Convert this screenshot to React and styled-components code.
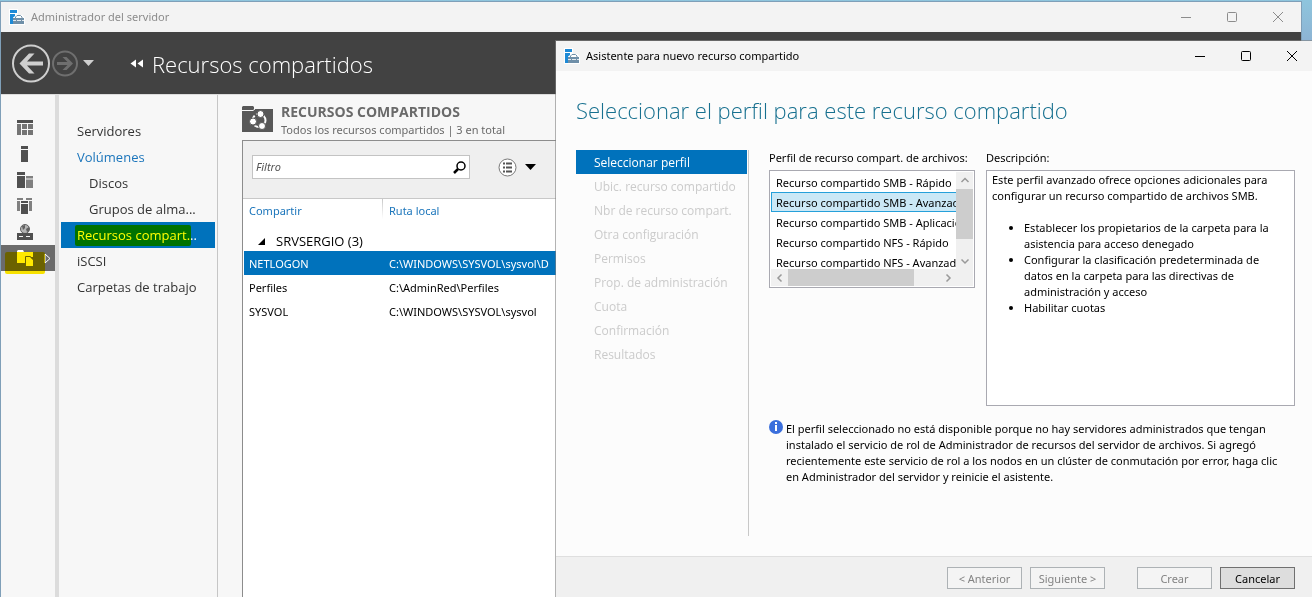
import React from 'react';
import styled, { createGlobalStyle, css } from 'styled-components';

const accent = '#0072bc';

const GlobalStyle = createGlobalStyle`
  * { box-sizing: border-box; }
  html, body, #root { height: 100%; margin: 0; }
  body {
    font-family: 'Noto Sans', 'Open Sans', sans-serif;
    font-size: 11px;
    line-height: 16px;
    color: #000;
    overflow: hidden;
  }
  button, input { font: inherit; color: inherit; }
  ul, h1, h2, p { margin: 0; padding: 0; font-weight: inherit; }
  ul { list-style: none; }
  a { color: inherit; text-decoration: none; }
  svg { display: block; flex: none; }
`;

const Desktop = styled.div`
  position: relative;
  height: 100vh;
  overflow: hidden;
  background: linear-gradient(#8ec5dd, #8db4d4 40px, #8fb0cc 60%, #3f9fc0 62%, #3b8fbd 80%, #3f5cab);
`;

/* ---------- windows ---------- */

const Window = styled.section`
  position: absolute;
  display: flex;
  flex-direction: column;
  border: 1px solid #7f9fb8;
  border-bottom: 0;
`;

const ManagerWindow = styled(Window)`
  inset: 1px 10px 0 0;
  background: #f7f7f7;
`;

const WizardWindow = styled(Window)`
  inset: 40px -4px 0 555px;
  border-color: rgba(128, 128, 128, 0.6);
  background: #fcfcfc;
  background-clip: padding-box;
`;

const TitleBar = styled.div`
  display: flex;
  align-items: center;
  height: 30px;
  flex: none;
  padding-left: 8px;
  gap: 6px;
  background: #f3f3f3;
  color: ${(p) => (p.$inactive ? '#8c8c8c' : '#000')};
`;

const TitleText = styled.span`
  flex: 1;
`;

const CaptionButton = styled.button`
  display: grid;
  place-items: center;
  width: 46px;
  height: 30px;
  margin: 0 0 0 -6px;
  padding: 0;
  border: 0;
  background: none;
`;

/* ---------- manager header ---------- */

const Banner = styled.header`
  display: flex;
  align-items: center;
  flex: none;
  height: 62px;
  padding-left: 10px;
  background: #424242;
  color: #fff;
`;

const PlainButton = styled.button`
  display: flex;
  align-items: center;
  margin: 0;
  padding: 0;
  border: 0;
  background: none;
`;

const HistoryButton = styled(PlainButton)`
  margin-right: 1px;
`;

const HistoryMenu = styled(PlainButton)`
  margin: 0 36px 0 4px;
`;

const BannerTitle = styled.h1`
  margin-left: 8px;
  padding-top: 2px;
  font-family: 'Open Sans', sans-serif;
  font-size: 22px;
  line-height: 32px;
  font-weight: 300;
`;

/* ---------- manager body ---------- */

const ManagerBody = styled.div`
  display: flex;
  flex: 1;
  min-height: 0;
  border-top: 1px solid #dcdcdc;
`;

const Rail = styled.nav`
  width: 58px;
  flex: none;
  padding-top: 20px;
  border-right: 4px solid #dcdcdc;
`;

const RailItem = styled.button`
  position: relative;
  display: flex;
  align-items: center;
  width: 100%;
  height: 26px;
  margin: 0;
  padding: 0 0 0 16px;
  border: 0;
  background: ${(p) => (p.$active ? '#6b6b6b' : 'none')};
`;

const RailArrow = styled.span`
  margin-left: 11px;
`;

const Marker = styled.span`
  position: absolute;
  background: ${(p) => p.$color};
  mix-blend-mode: multiply;
  pointer-events: none;
  border-radius: 2px;
`;

const RailMarker = styled(Marker)`
  inset: 7px 10px -3px 4px;
`;

const NavMarker = styled(Marker)`
  inset: 3px 24px 2px 14px;
`;

const SideNav = styled.nav`
  width: 159px;
  flex: none;
  padding: 23px 2px 0;
  border-right: 1px solid #c6c6c6;
  font-family: 'Open Sans', sans-serif;
  font-size: 13px;
`;

const NavLink = styled.a`
  position: relative;
  display: block;
  height: 26px;
  line-height: 26px;
  padding-left: ${(p) => (p.$nested ? 28 : 16)}px;
  white-space: nowrap;
  color: ${(p) => (p.$tone === 'link' ? '#1b75bb' : p.$active ? '#fff' : '#333')};
  background: ${(p) => (p.$active ? accent : 'none')};
`;

const Content = styled.main`
  flex: 1;
  min-width: 0;
  display: flex;
  flex-direction: column;
  padding: 7px 0 0 24px;
`;

const SectionHead = styled.div`
  display: flex;
  align-items: flex-start;
  gap: 8px;
  height: 38px;
  flex: none;
  color: #6a6a6a;
`;

const FolderSlot = styled.div`
  padding-top: 4px;
`;

const SectionTitle = styled.h2`
  padding-top: 1px;
  font-family: 'Open Sans', sans-serif;
  font-size: 14px;
  line-height: 18px;
  font-weight: 700;
`;

const SectionNote = styled.p`
  line-height: 18px;
`;

const Panel = styled.div`
  flex: 1;
  border: 1px solid #8c8c8c;
  border-width: 1px 0 0 1px;
  background: #fff;
`;

const Toolbar = styled.div`
  display: flex;
  align-items: center;
  height: 58px;
  padding: 0 0 5px 9px;
  background: #efefef;
  border-bottom: 1px solid #c8c8c8;
`;

const FilterBox = styled.label`
  display: flex;
  align-items: center;
  width: 218px;
  height: 24px;
  margin-right: 28px;
  padding: 0 3px;
  border: 1px solid #c3c3c3;
  background: #fff;
`;

const FilterInput = styled.input`
  flex: 1;
  min-width: 0;
  padding: 0;
  border: 0;
  outline: 0;
  background: none;
  font-style: italic;
  &::placeholder { color: #555; opacity: 1; }
`;

const OptionsButton = styled(PlainButton)`
  gap: 8px;
`;

const ShareTable = styled.table`
  width: 100%;
  padding-left: 1px;
  border-spacing: 0;
  table-layout: fixed;
  text-align: left;
`;

const HeadCell = styled.th`
  height: 32px;
  padding: 4px 0 0 ${(p) => (p.$first ? 5 : 6)}px;
  width: ${(p) => (p.$first ? '139px' : 'auto')};
  vertical-align: top;
  font-weight: 400;
  color: #1b75bb;
  background: ${(p) => (p.$first ? 'linear-gradient(#c8c8c8, #fff) right top / 1px 20px no-repeat' : 'none')};
`;

const GroupCell = styled.td`
  height: 20px;
  padding: 0 0 0 14px;
  font-family: 'Open Sans', sans-serif;
  font-size: 13px;
`;

const GroupLabel = styled.span`
  display: flex;
  align-items: center;
  gap: 10px;
`;

const ShareRow = styled.tr`
  height: 24px;
  color: ${(p) => (p.$selected ? '#fff' : '#000')};
  background: ${(p) => (p.$selected ? accent : 'none')};
`;

const Cell = styled.td`
  padding: 1px 0 0 ${(p) => (p.$first ? 5 : 6)}px;
  white-space: nowrap;
`;

/* ---------- wizard ---------- */

const WizardTitle = styled.h1`
  flex: none;
  padding: 23px 20px 0;
  font-family: 'Open Sans', sans-serif;
  font-size: 22px;
  line-height: 32px;
  font-weight: 300;
  color: #17708f;
`;

const WizardBody = styled.div`
  display: flex;
  flex: 1;
  min-height: 0;
  padding: 24px 20px 20px;
  gap: 20px;
`;

const Steps = styled.ol`
  width: 173px;
  flex: none;
  margin: 0;
  padding: 0 1px 0 0;
  list-style: none;
  border-right: 1px solid #c8c8c8;
  font-family: 'Open Sans', sans-serif;
  font-size: 12px;
`;

const Step = styled.li`
  height: 24px;
  line-height: 24px;
  padding: 1px 0 0 18px;
  color: ${(p) => (p.$current ? '#fff' : '#cbcbcb')};
  background: ${(p) => (p.$current ? accent : 'none')};
`;

const StepPage = styled.div`
  flex: 1;
  min-width: 0;
`;

const Columns = styled.div`
  display: flex;
  align-items: flex-start;
  gap: 11px;
`;

const Field = styled.div`
  width: ${(p) => (p.$grow ? 'auto' : '206px')};
  flex: ${(p) => (p.$grow ? '1' : 'none')};
  min-width: 0;
  white-space: nowrap;
`;

const FieldLabel = styled.div`
  height: 20px;
`;

const ListFrame = styled.div`
  display: grid;
  grid-template-columns: 1fr 17px;
  grid-template-rows: 97px 17px;
  height: 118px;
  padding: 1px;
  border: 1px solid #a9a9b1;
  background: #fff;
`;

const ProfileList = styled.ul`
  overflow: hidden;
`;

const Profile = styled.li`
  height: 20px;
  padding: 2px 0 0 4px;
  border: 1px solid transparent;
  border-right: 0;
  overflow: hidden;
  ${(p) => p.$selected && css`
    background: #cbe8f6;
    border-color: #26a0da;
  `}
`;

const Scrollbar = styled.div`
  display: flex;
  flex-direction: ${(p) => (p.$horizontal ? 'row' : 'column')};
  background: #f0f0f0;
`;

const ScrollArrow = styled(PlainButton)`
  width: 17px;
  height: 17px;
  flex: none;
  justify-content: center;
`;

const Thumb = styled.div`
  flex: ${(p) => p.$size} 1 0;
  background: #cdcdcd;
`;

const Track = styled.div`
  flex: ${(p) => p.$size} 1 0;
`;

const Corner = styled.div`
  background: #f0f0f0;
`;

const Description = styled.div`
  height: 236px;
  padding: 1px 5px;
  border: 1px solid #a9a9b1;
  background: #fff;
`;

const Bullets = styled.ul`
  margin-top: 16px;
  padding-left: 32px;
  list-style: disc;
`;

const Notice = styled.div`
  display: flex;
  gap: 3px;
  margin-top: 14px;
  white-space: nowrap;
`;

const NoticeText = styled.p`
  padding-top: 1px;
`;

const Footer = styled.footer`
  display: flex;
  flex: none;
  align-items: flex-start;
  justify-content: flex-end;
  height: 41px;
  padding: 10px 20px 0;
  gap: 8px;
  border-top: 1px solid #dfdfdf;
  background: #f0f0f0;
`;

const ButtonPair = styled.div`
  display: flex;
  gap: 8px;
  margin-right: 24px;
`;

const PushButton = styled.button`
  width: 75px;
  height: 22px;
  margin: 0;
  padding: 1px 0 0;
  border: 1px solid #707070;
  background: #ddd;
  &:disabled {
    color: #838383;
    border-color: #adb2b5;
    background: #f4f4f4;
  }
`;

/* ---------- icons ---------- */

const ServerIcon = () => (
  <svg width="16" height="16" viewBox="0 0 16 16" aria-hidden="true">
    <path fill="#fff" d="M0 0h9v6h4.500l1.500 2v.5h1V16H0z" />
    <path fill="#1e8ad6" d="M1 1h7v3H1zM1 5h5v2L4 8.500V15H1z" />
    <path fill="#6f8fa8" d="M4 9h11v6H4z" />
    <path fill="none" stroke="#6f8fa8" d="M6.500 9V8L8 6.500h3.500L13 8v1" />
    <path stroke="#fff" strokeOpacity=".8" d="M4 11.500h3M8 11.500h4M13 11.500h2" />
  </svg>
);

const CaptionIcon = ({ kind }) => (
  <svg width="12" height="12" viewBox="0 0 12 12" fill="none" stroke="currentColor" aria-hidden="true">
    {kind === 'min' && <path d="M1 6.500h10" />}
    {kind === 'max' && <rect x="1.500" y="1.500" width="9" height="9" rx="1" />}
    {kind === 'close' && <path d="M1 1l10 10M11 1L1 11" />}
  </svg>
);

const BackIcon = () => (
  <svg width="39" height="39" viewBox="0 0 39 39" fill="none" aria-hidden="true">
    <circle cx="20" cy="19.500" r="18" stroke="#cfcfcf" strokeWidth="2" />
    <path fill="#cfcfcf" d="M8.500 19.500L18 9.500h5.500l-7.500 8h16v4H16l7.500 8H18z" />
  </svg>
);

const ForwardIcon = () => (
  <svg width="27" height="27" viewBox="0 0 27 27" fill="none" aria-hidden="true">
    <circle cx="14" cy="13.500" r="12" stroke="#6f6f6f" strokeWidth="2" />
    <path fill="#6f6f6f" d="M22 13.500L15.500 7H11.500l5 5H6v3h10.500l-5 5h4z" />
  </svg>
);

const DownTriangle = ({ color }) => (
  <svg width="11" height="6" viewBox="0 0 11 6" aria-hidden="true">
    <path fill={color} d="M0 0h11L5.500 6z" />
  </svg>
);

const CrumbIcon = () => (
  <svg width="14" height="9" viewBox="0 0 14 9" fill="#fff" aria-hidden="true">
    <path d="M6 .500v8L.500 4.500zM13 .500v8L7.500 4.500z" />
  </svg>
);

const RailIcon = ({ kind }) => (
  <svg width="16" height="16" viewBox="0 0 16 16" aria-hidden="true">
    {kind === 'dashboard' && (
      <>
        <path fill="#505050" d="M0 0h16v3H0z" />
        <path fill="#757575" d="M0 4h4v11H0zM5 4h5v5H5zM11 4h5v5h-5zM5 10h5v5H5zM11 10h5v5h-5z" />
      </>
    )}
    {kind === 'local' && <path fill="#505050" d="M4 0h7v3H4zM4 4h7v12H4z" />}
    {kind === 'all' && (
      <>
        <path fill="#505050" d="M0 0h8v3H0zM0 4h8v12H0z" />
        <path fill="#808080" d="M9 4h7v2.500H9zM9 7.500h7V16H9z" />
      </>
    )}
    {kind === 'adds' && (
      <>
        <path fill="#808080" d="M0 0h6v2H0zM9 0h6v2H9zM0 3h3v10H0zM12 3h3v10h-3z" />
        <path fill="#505050" d="M4 3h7v2H4zM4 6h7v10H4z" />
      </>
    )}
    {kind === 'dns' && (
      <>
        <circle cx="8" cy="5" r="4.500" fill="#b4b4b4" stroke="#606060" />
        <path fill="#606060" d="M5 2l3-1v3L6 6zM9 5l3-2v4l-2 1z" />
        <path fill="#505050" d="M0 9h16v7H0z" />
        <path stroke="#f7f7f7" d="M2 12.500h4M9 12.500h4" />
      </>
    )}
    {kind === 'files' && (
      <>
        <path fill="#fff" d="M0 1l1-1h5l1 2h9v5H8v6H0z" />
        <path fill="#fff" d="M9 7h4l3 3v6H9z" />
        <path fill="none" stroke="#6b6b6b" d="M8.500 14V6.500h5l2.500 3" />
      </>
    )}
  </svg>
);

const ArrowOutline = () => (
  <svg width="7" height="11" viewBox="0 0 7 11" aria-hidden="true">
    <path fill="none" stroke="#fff" d="M1 1v9l5-4.500z" />
  </svg>
);

const ShareFolderIcon = () => (
  <svg width="31" height="26" viewBox="0 0 31 26" aria-hidden="true">
    <path fill="#585858" d="M0 1l1-1h10l1 1v2h19v23H0z" />
    <path fill="none" stroke="#f7f7f7" d="M0 4.500h11L13 3" />
    <circle cx="17" cy="14.500" r="6.500" fill="none" stroke="#fff" strokeWidth="2" />
    <path stroke="#585858" strokeWidth="2" d="M12 7.500l3 3M9 20l5-2M23 18l4 3" />
    <g fill="#fff" stroke="#585858">
      <circle cx="18.500" cy="8" r="3.500" />
      <circle cx="11" cy="15.500" r="3.500" />
      <circle cx="20" cy="20" r="3.500" />
    </g>
  </svg>
);

const SearchIcon = () => (
  <svg width="13" height="13" viewBox="0 0 13 13" fill="none" stroke="#000" aria-hidden="true">
    <circle cx="8" cy="5" r="4" strokeWidth="1.500" />
    <path d="M5 8l-4 4" strokeWidth="2.500" />
  </svg>
);

const ListOptionsIcon = () => (
  <svg width="19" height="19" viewBox="0 0 19 19" fill="none" aria-hidden="true">
    <circle cx="9.500" cy="9.500" r="8.500" fill="#fff" stroke="#777" />
    <path stroke="#555" d="M5 5.500h2M5 9.500h2M5 13.500h2M8 5.500h6M8 9.500h6M8 13.500h6" strokeWidth="2" />
  </svg>
);

const GroupArrow = () => (
  <svg width="8" height="7" viewBox="0 0 8 7" aria-hidden="true">
    <path d="M7 0v7H0z" />
  </svg>
);

const chevrons = {
  up: 'M1.500 6l3.500-3.500L8.500 6',
  down: 'M1.500 3.500L5 7l3.500-3.500',
  left: 'M6.500 1.500L3 5l3.500 3.500',
  right: 'M3.500 1.500L7 5l-3.500 3.500',
};

const Chevron = ({ to }) => (
  <svg width="10" height="10" viewBox="0 0 10 10" fill="none" stroke="#999" strokeWidth="1.500" aria-hidden="true">
    <path d={chevrons[to]} />
  </svg>
);

const InfoIcon = () => (
  <svg width="14" height="14" viewBox="0 0 14 14" aria-hidden="true">
    <circle cx="7" cy="7" r="7" fill="#3b6fdc" />
    <path fill="#fff" d="M6 2h2v2H6zM6 5h2v6H6z" />
  </svg>
);

/* ---------- data ---------- */

const railItems = [
  ['dashboard', 'Panel'],
  ['local', 'Servidor local'],
  ['all', 'Todos los servidores'],
  ['adds', 'AD DS'],
  ['dns', 'DNS'],
  ['files', 'Servicios de archivos'],
];

const navItems = [
  { text: 'Servidores' },
  { text: 'Volúmenes', tone: 'link' },
  { text: 'Discos', nested: true },
  { text: 'Grupos de alma...', nested: true },
  { text: 'Recursos compart...', active: true },
  { text: 'iSCSI' },
  { text: 'Carpetas de trabajo' },
];

const shares = [
  ['NETLOGON', 'C:\\WINDOWS\\SYSVOL\\sysvol\\D'],
  ['Perfiles', 'C:\\AdminRed\\Perfiles'],
  ['SYSVOL', 'C:\\WINDOWS\\SYSVOL\\sysvol'],
];

const steps = [
  'Seleccionar perfil',
  'Ubic. recurso compartido',
  'Nbr de recurso compart.',
  'Otra configuración',
  'Permisos',
  'Prop. de administración',
  'Cuota',
  'Confirmación',
  'Resultados',
];

const profiles = [
  'Recurso compartido SMB - Rápido',
  'Recurso compartido SMB - Avanzado',
  'Recurso compartido SMB - Aplicaciones',
  'Recurso compartido NFS - Rápido',
  'Recurso compartido NFS - Avanzado',
];

const Caption = ({ title, inactive }) => (
  <TitleBar $inactive={inactive}>
    <ServerIcon />
    <TitleText>{title}</TitleText>
    <CaptionButton aria-label="Minimizar"><CaptionIcon kind="min" /></CaptionButton>
    <CaptionButton aria-label="Maximizar"><CaptionIcon kind="max" /></CaptionButton>
    <CaptionButton aria-label="Cerrar"><CaptionIcon kind="close" /></CaptionButton>
  </TitleBar>
);

const Manager = () => (
  <ManagerWindow aria-label="Administrador del servidor">
    <Caption title="Administrador del servidor" inactive />
    <Banner>
      <HistoryButton aria-label="Atrás"><BackIcon /></HistoryButton>
      <HistoryButton aria-label="Adelante"><ForwardIcon /></HistoryButton>
      <HistoryMenu aria-label="Historial"><DownTriangle color="#cfcfcf" /></HistoryMenu>
      <CrumbIcon />
      <BannerTitle>Recursos compartidos</BannerTitle>
    </Banner>
    <ManagerBody>
      <Rail>
        {railItems.map(([kind, label]) => (
          <RailItem key={kind} $active={kind === 'files'} aria-label={label}>
            <RailIcon kind={kind} />
            {kind === 'files' && (
              <>
                <RailArrow><ArrowOutline /></RailArrow>
                <RailMarker $color="#ffe900" />
              </>
            )}
          </RailItem>
        ))}
      </Rail>
      <SideNav>
        {navItems.map((item) => (
          <NavLink key={item.text} href="#" $nested={item.nested} $active={item.active} $tone={item.tone}>
            {item.text}
            {item.active && <NavMarker $color="#ffff00" />}
          </NavLink>
        ))}
      </SideNav>
      <Content>
        <SectionHead>
          <FolderSlot><ShareFolderIcon /></FolderSlot>
          <div>
            <SectionTitle>RECURSOS COMPARTIDOS</SectionTitle>
            <SectionNote>Todos los recursos compartidos | 3 en total</SectionNote>
          </div>
        </SectionHead>
        <Panel>
          <Toolbar>
            <FilterBox>
              <FilterInput type="text" placeholder="Filtro" aria-label="Filtro" />
              <SearchIcon />
            </FilterBox>
            <OptionsButton aria-label="Opciones de lista">
              <ListOptionsIcon />
              <DownTriangle color="#000" />
            </OptionsButton>
          </Toolbar>
          <ShareTable>
            <thead>
              <tr>
                <HeadCell $first>Compartir</HeadCell>
                <HeadCell>Ruta local</HeadCell>
              </tr>
            </thead>
            <tbody>
              <tr>
                <GroupCell colSpan={2}>
                  <GroupLabel><GroupArrow />SRVSERGIO (3)</GroupLabel>
                </GroupCell>
              </tr>
              {shares.map(([name, path], i) => (
                <ShareRow key={name} $selected={i === 0}>
                  <Cell $first>{name}</Cell>
                  <Cell>{path}</Cell>
                </ShareRow>
              ))}
            </tbody>
          </ShareTable>
        </Panel>
      </Content>
    </ManagerBody>
  </ManagerWindow>
);

const Wizard = () => (
  <WizardWindow role="dialog" aria-label="Asistente para nuevo recurso compartido">
    <Caption title="Asistente para nuevo recurso compartido" />
    <WizardTitle>Seleccionar el perfil para este recurso compartido</WizardTitle>
    <WizardBody>
      <Steps>
        {steps.map((step, i) => (
          <Step key={step} $current={i === 0}>{step}</Step>
        ))}
      </Steps>
      <StepPage>
        <Columns>
          <Field>
            <FieldLabel id="profile-label">Perfil de recurso compart. de archivos:</FieldLabel>
            <ListFrame>
              <ProfileList role="listbox" aria-labelledby="profile-label">
                {profiles.map((name, i) => (
                  <Profile key={name} role="option" aria-selected={i === 1} $selected={i === 1}>{name}</Profile>
                ))}
              </ProfileList>
              <Scrollbar>
                <ScrollArrow aria-label="Subir"><Chevron to="up" /></ScrollArrow>
                <Thumb $size={50} />
                <Track $size={13} />
                <ScrollArrow aria-label="Bajar"><Chevron to="down" /></ScrollArrow>
              </Scrollbar>
              <Scrollbar $horizontal>
                <ScrollArrow aria-label="Izquierda"><Chevron to="left" /></ScrollArrow>
                <Thumb $size={126} />
                <Track $size={25} />
                <ScrollArrow aria-label="Derecha"><Chevron to="right" /></ScrollArrow>
              </Scrollbar>
              <Corner />
            </ListFrame>
          </Field>
          <Field $grow>
            <FieldLabel>Descripción:</FieldLabel>
            <Description>
              <p>
                Este perfil avanzado ofrece opciones adicionales para<br />
                configurar un recurso compartido de archivos SMB.
              </p>
              <Bullets>
                <li>Establecer los propietarios de la carpeta para la<br />asistencia para acceso denegado</li>
                <li>Configurar la clasificación predeterminada de<br />datos en la carpeta para las directivas de<br />administración y acceso</li>
                <li>Habilitar cuotas</li>
              </Bullets>
            </Description>
          </Field>
        </Columns>
        <Notice>
          <InfoIcon />
          <NoticeText>
            El perfil seleccionado no está disponible porque no hay servidores administrados que tengan<br />
            instalado el servicio de rol de Administrador de recursos del servidor de archivos. Si agregó<br />
            recientemente este servicio de rol a los nodos en un clúster de conmutación por error, haga clic<br />
            en Administrador del servidor y reinicie el asistente.
          </NoticeText>
        </Notice>
      </StepPage>
    </WizardBody>
    <Footer>
      <ButtonPair>
        <PushButton disabled>&lt; Anterior</PushButton>
        <PushButton disabled>Siguiente &gt;</PushButton>
      </ButtonPair>
      <PushButton disabled>Crear</PushButton>
      <PushButton>Cancelar</PushButton>
    </Footer>
  </WizardWindow>
);

export default function App() {
  return (
    <>
      <GlobalStyle />
      <Desktop>
        <Manager />
        <Wizard />
      </Desktop>
    </>
  );
}
